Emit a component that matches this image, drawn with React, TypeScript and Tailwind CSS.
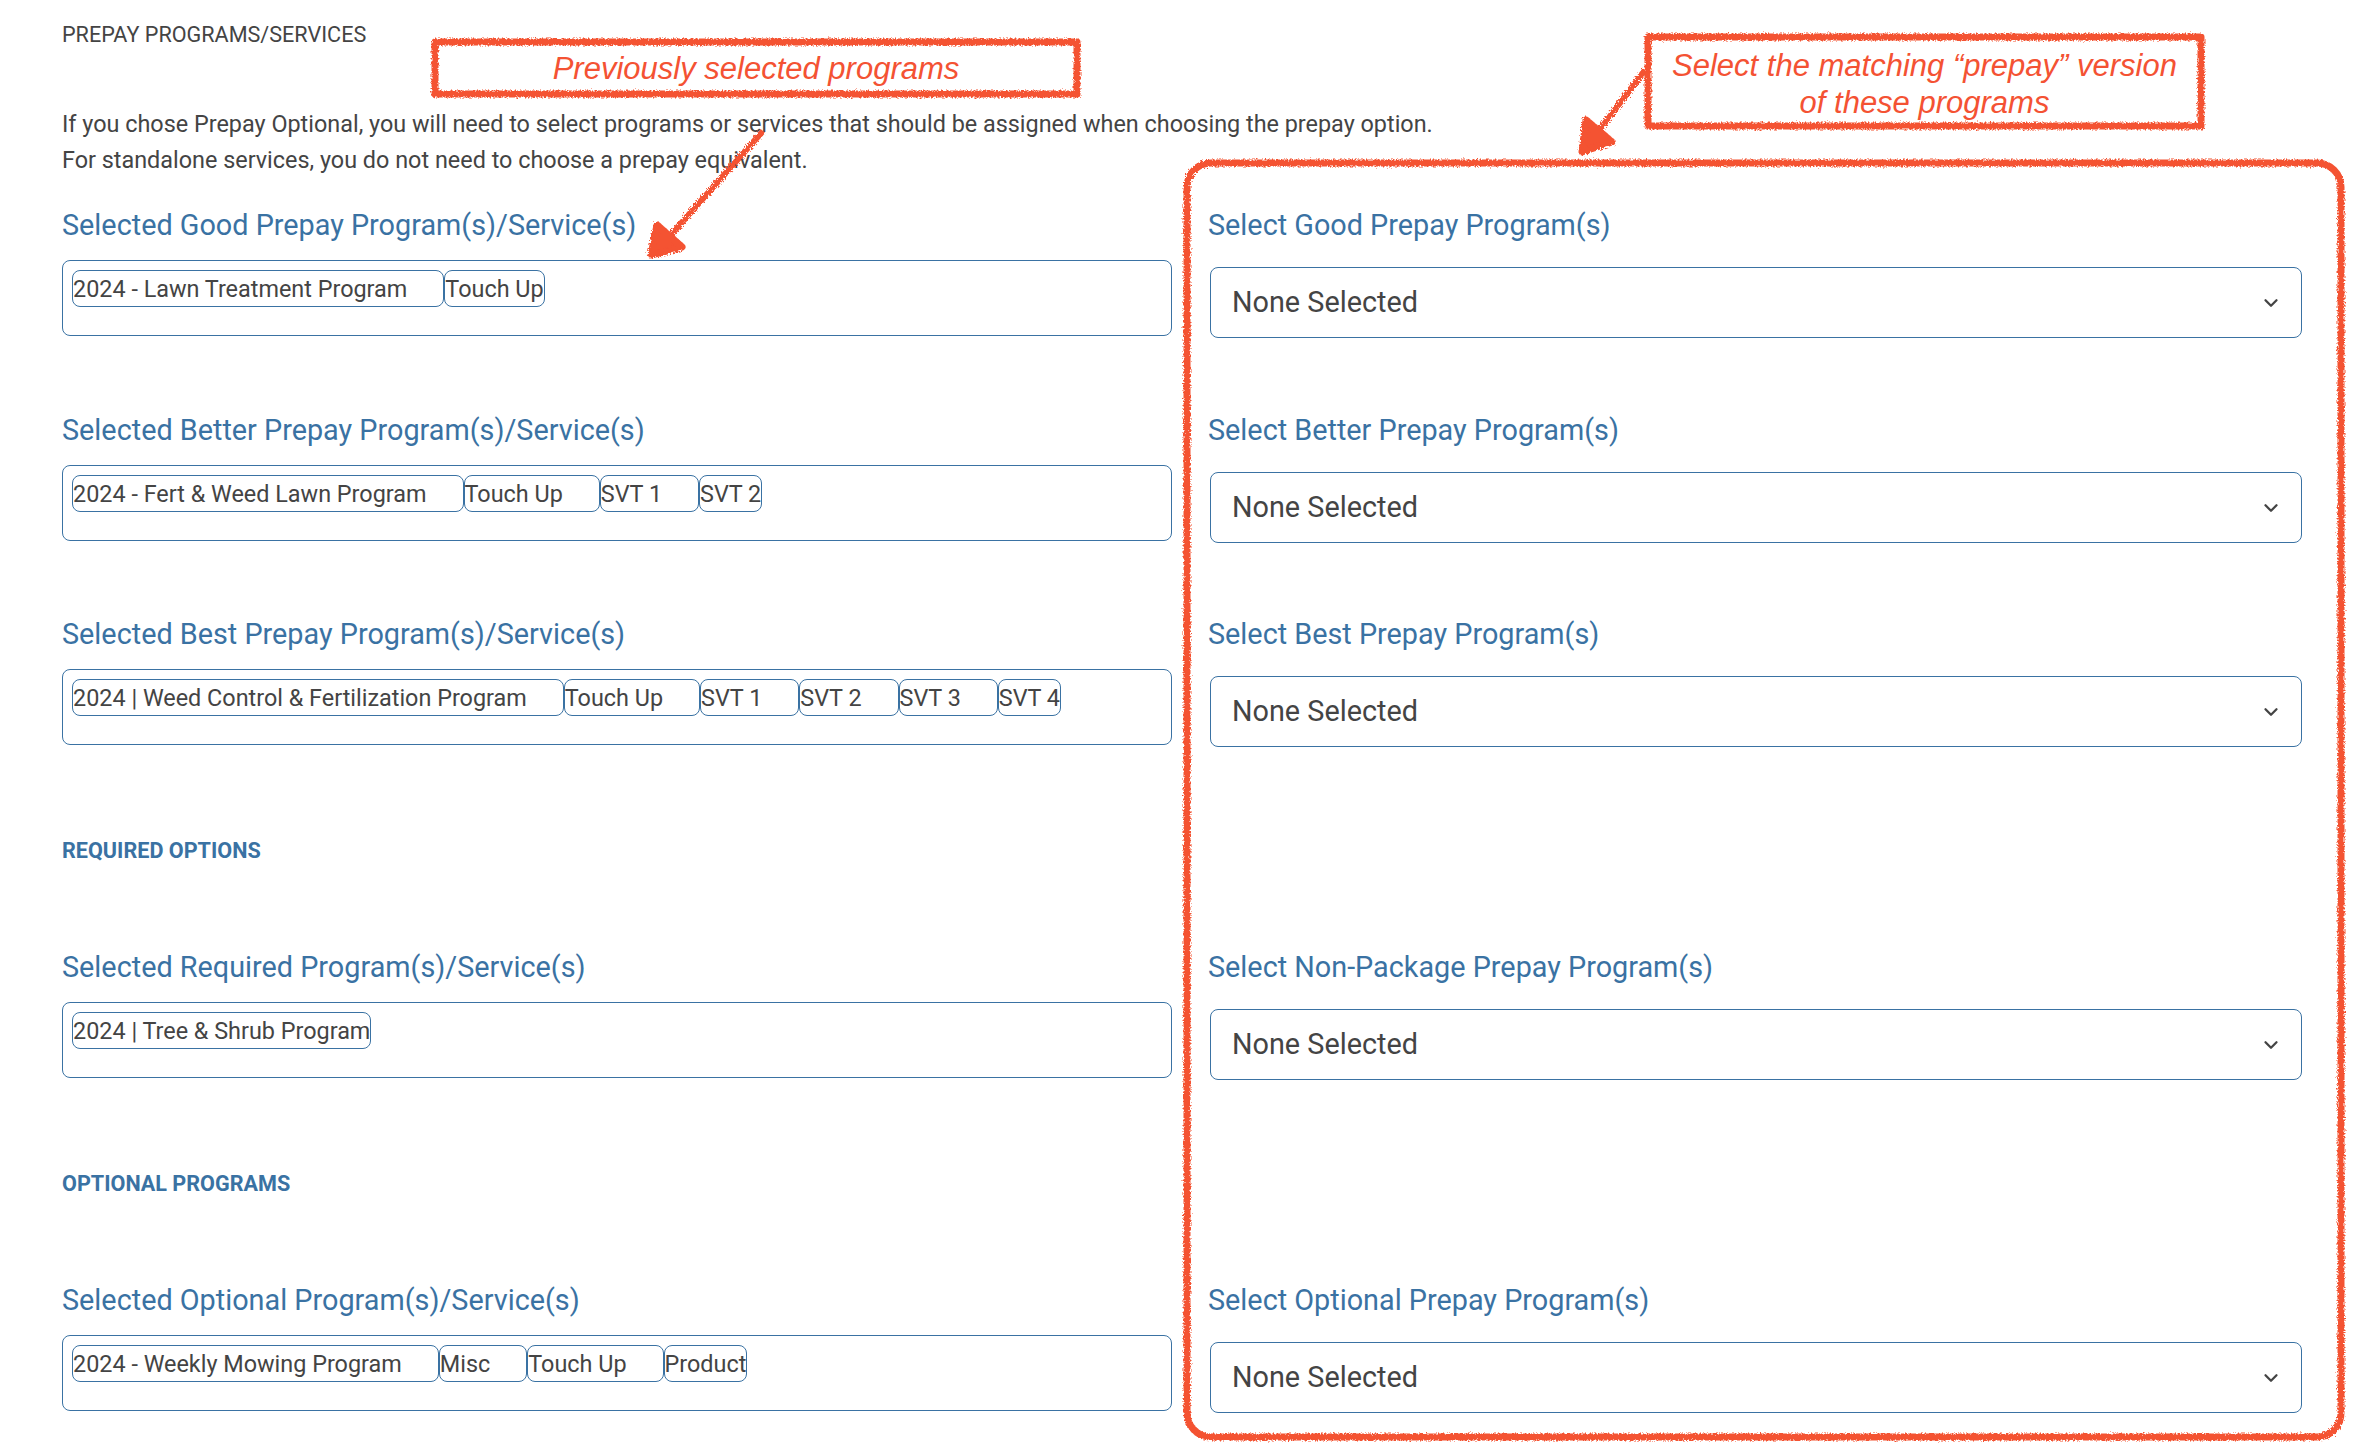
import { ChevronDown } from 'lucide-react';

function Chips({ items }: { items: string[] }) {
  return (
    <div className="flex items-start h-[76px] w-[1110px] border border-[#3a72a3] rounded-lg pt-[9px] pl-[9px]">
      {items.map((item, i) => (
        <span
          key={item}
          className={`h-[37px] leading-[37px] border border-[#3a72a3] rounded-lg text-[23.4px] text-[#444] whitespace-nowrap ${i < items.length - 1 ? 'pr-[36px]' : ''}`}
        >
          {item}
        </span>
      ))}
    </div>
  );
}

function Row({ left, right, items, className }: { left: string; right: string; items: string[]; className: string }) {
  return (
    <div className={`flex items-start ${className}`}>
      <div>
        <h3 className="text-[28.8px] leading-[40px] text-[#3a72a3] mb-[15px]">{left}</h3>
        <Chips items={items} />
      </div>
      <div className="ml-[36px]">
        <h3 className="text-[28.8px] leading-[40px] text-[#3a72a3] mb-[22px]">{right}</h3>
        <div className="flex items-center justify-between w-[1092px] h-[71px] ml-[2px] border border-[#3a72a3] rounded-lg pl-[21px] pr-[19px]">
          <span className="text-[28.8px] text-[#444]">None Selected</span>
          <ChevronDown size={22} strokeWidth={2.5} className="text-[#444]" />
        </div>
      </div>
    </div>
  );
}

function Annotations() {
  return (
    <>
      <svg className="absolute inset-0 pointer-events-none" width="2364" height="1456" fill="none">
        <defs>
          <filter id="rough" x="-5%" y="-5%" width="110%" height="110%">
            <feTurbulence type="fractalNoise" baseFrequency="0.6" numOctaves="2" seed="3" />
            <feDisplacementMap in="SourceGraphic" scale="5" />
          </filter>
        </defs>
        <g filter="url(#rough)" stroke="#f45233" strokeWidth="7" strokeLinejoin="round">
          <rect x="435" y="42" width="642" height="52" />
          <rect x="1648" y="37" width="553" height="89" />
          <rect x="1187" y="163" width="1154" height="1274" rx="24" />
          <path d="M763 131 L668 238" strokeWidth="6" />
          <path d="M1645 70 L1598 132" strokeWidth="6" />
          <path d="M651 255 L657 225 L682 247 Z" fill="#f45233" />
          <path d="M1582 152 L1586 120 L1612 142 Z" fill="#f45233" />
        </g>
      </svg>
      <div className="absolute left-[432px] top-[40px] w-[648px] h-[59px] flex items-center justify-center italic text-[31px] text-[#f45233] font-['Liberation_Sans',sans-serif]">
        Previously selected programs
      </div>
      <div className="absolute left-[1645px] top-[47px] w-[559px] text-center italic text-[31px] leading-[37px] text-[#f45233] font-['Liberation_Sans',sans-serif]">
        Select the matching “prepay” version
        <br />
        of these programs
      </div>
    </>
  );
}

export default function App() {
  return (
    <div className="relative w-[2364px] h-[1456px] bg-white overflow-hidden pl-[62px] pt-[21px] font-['Roboto',sans-serif]">
      <p className="text-[21.6px] leading-[28px] text-[#444]">PREPAY PROGRAMS/SERVICES</p>
      <p className="mt-[57px] text-[23.4px] leading-[36px] text-[#444]">
        If you chose Prepay Optional, you will need to select programs or services that should be assigned when choosing the prepay option.
        <br />
        For standalone services, you do not need to choose a prepay equivalent.
      </p>

      <Row
        className="mt-[27px]"
        left="Selected Good Prepay Program(s)/Service(s)"
        right="Select Good Prepay Program(s)"
        items={['2024 - Lawn Treatment Program', 'Touch Up']}
      />
      <Row
        className="mt-[72px]"
        left="Selected Better Prepay Program(s)/Service(s)"
        right="Select Better Prepay Program(s)"
        items={['2024 - Fert & Weed Lawn Program', 'Touch Up', 'SVT 1', 'SVT 2']}
      />
      <Row
        className="mt-[71px]"
        left="Selected Best Prepay Program(s)/Service(s)"
        right="Select Best Prepay Program(s)"
        items={['2024 | Weed Control & Fertilization Program', 'Touch Up', 'SVT 1', 'SVT 2', 'SVT 3', 'SVT 4']}
      />

      <h4 className="mt-[90px] text-[21.6px] leading-[28px] font-bold text-[#3a72a3]">REQUIRED OPTIONS</h4>

      <Row
        className="mt-[82px]"
        left="Selected Required Program(s)/Service(s)"
        right="Select Non-Package Prepay Program(s)"
        items={['2024 | Tree & Shrub Program']}
      />

      <h4 className="mt-[90px] text-[21.6px] leading-[28px] font-bold text-[#3a72a3]">OPTIONAL PROGRAMS</h4>

      <Row
        className="mt-[82px]"
        left="Selected Optional Program(s)/Service(s)"
        right="Select Optional Prepay Program(s)"
        items={['2024 - Weekly Mowing Program', 'Misc', 'Touch Up', 'Product']}
      />

      <Annotations />
    </div>
  );
}
